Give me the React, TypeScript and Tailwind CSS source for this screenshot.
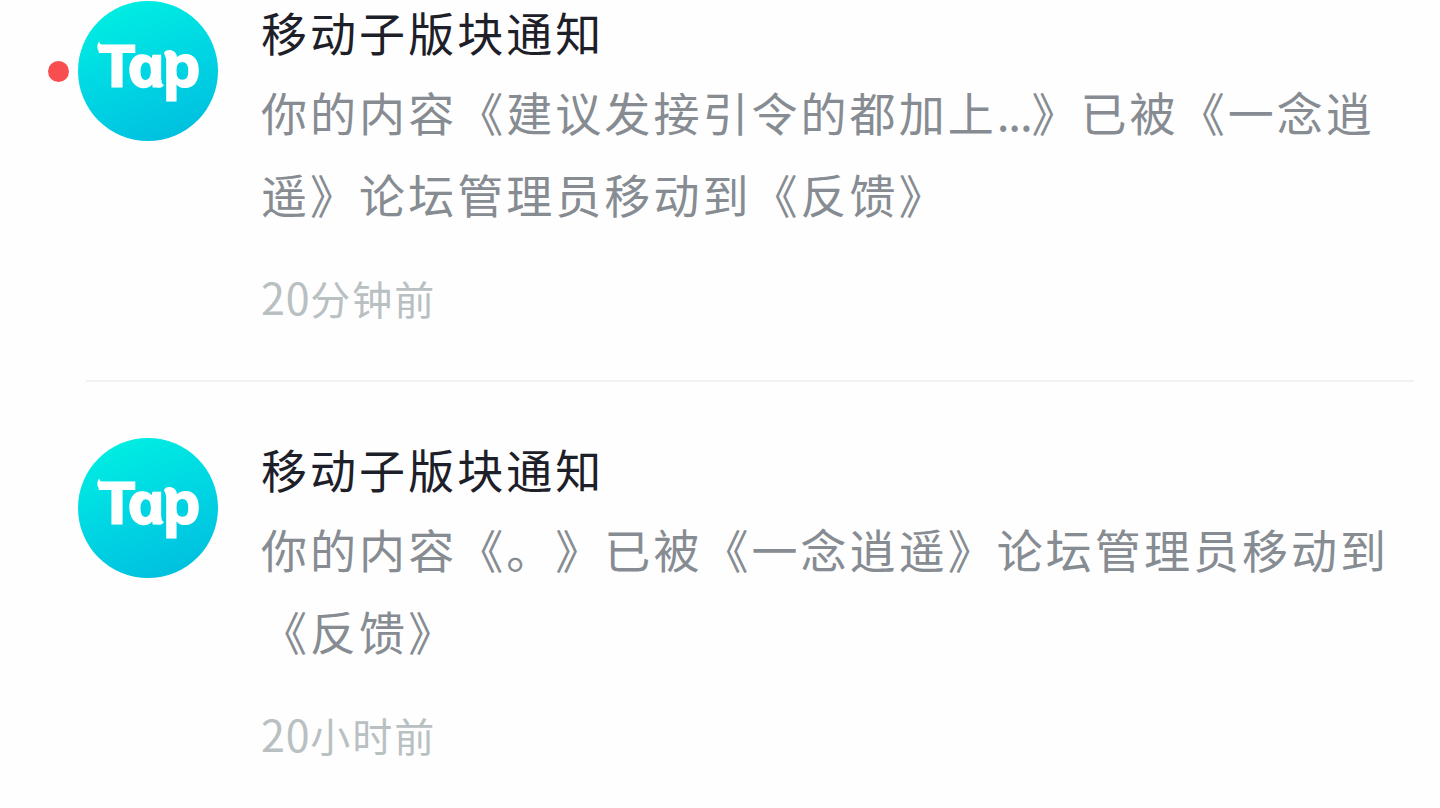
import React from 'react';

interface Notification {
  id: number;
  title: string;
  lines: string[];
  amount: string;
  unit: string;
  unread: boolean;
}

const notifications: Notification[] = [
  {
    id: 1,
    title: '移动子版块通知',
    lines: ['你的内容《建议发接引令的都加上...》已被《一念逍', '遥》论坛管理员移动到《反馈》'],
    amount: '20',
    unit: '分钟前',
    unread: true,
  },
  {
    id: 2,
    title: '移动子版块通知',
    lines: ['你的内容《。》已被《一念逍遥》论坛管理员移动到', '《反馈》'],
    amount: '20',
    unit: '小时前',
    unread: false,
  },
];

function TapAvatar() {
  return (
    <svg viewBox="0 0 140 140" className="block size-[140px]" role="img" aria-label="Tap">
      <defs>
        <linearGradient id="tap-bg" x1="0.3" y1="0" x2="0.7" y2="1">
          <stop offset="0" stopColor="#00eee2" />
          <stop offset="0.5" stopColor="#00d6e3" />
          <stop offset="1" stopColor="#00bfdf" />
        </linearGradient>
      </defs>
      <circle cx="70" cy="70" r="70" fill="url(#tap-bg)" />
      <g fill="#fff" stroke="#fff" className="font-['Open_Sans'] font-bold">
        <text x="20" y="85.5" fontSize="59" strokeWidth="1" textLength="38" lengthAdjust="spacingAndGlyphs">T</text>
        {/* Upright italic gives the single-storey "a" */}
        <text transform="translate(52.5 85.5) scale(1.12 1) skewX(12)" fontSize="58" strokeWidth="1.2" className="italic">a</text>
        <text x="84" y="85.5" fontSize="59" strokeWidth="1" textLength="39" lengthAdjust="spacingAndGlyphs">p</text>
        {/* Small flicks on the bar, the stem and the tail */}
        <g stroke="none">
          <path d="M21.5 40.5C18.5 43 18.5 49 22 51L28 51V44H24Q21.5 43.5 21.5 40.5Z" />
          <path d="M86 52C87 48.5 93 48 96 50.5Q99 52.5 99 57L89 60Z" />
          <path d="M79 78L83.5 79Q83 83 86 84Q84.5 87 80 86.5Q76 86 76 82Z" />
        </g>
      </g>
    </svg>
  );
}

// The dots of an ellipsis sit closer together than the characters around them
function BodyLine({ text }: { text: string }) {
  const [before, after] = text.split('...');
  return (
    <p>
      {before}
      {after !== undefined && (
        <>
          <span className="tracking-[-1.2px]">...</span>
          {after}
        </>
      )}
    </p>
  );
}

function NotificationItem({ item }: { item: Notification }) {
  return (
    <article className="flex h-[379px] pl-12">
      <div className="flex h-[140px] w-[30px] shrink-0 items-center">
        {item.unread && <span className="size-[21px] rounded-full bg-[#f94e50]" />}
      </div>
      <div className="shrink-0">
        <TapAvatar />
      </div>
      <div className="ml-[43px] whitespace-nowrap [text-spacing-trim:space-all]">
        <h2 className="h-[69px] text-[46px] leading-[61px] tracking-[3.05px] text-[#1d2028]">{item.title}</h2>
        <div className="text-[46px] leading-[82px] tracking-[3.05px] text-[#868c92]">
          {item.lines.map((line) => (
            <BodyLine key={line} text={line} />
          ))}
        </div>
        <p className="mt-[32px] text-[40px] leading-[60px] tracking-[2px] text-[#b9c0c2]">
          <span className="text-[43px] tracking-[0.8px]">{item.amount}</span>
          {item.unit}
        </p>
      </div>
    </article>
  );
}

export default function App() {
  return (
    <main
      lang="zh-CN"
      className="h-[808px] w-[1440px] overflow-hidden bg-[#fefefe] pt-px font-['Noto_Sans_CJK_SC',sans-serif]"
    >
      {notifications.map((item, index) => (
        <React.Fragment key={item.id}>
          {index > 0 && <div className="mr-[26px] mb-[55.5px] ml-[86px] h-0.5 bg-[#f1f1f1]" />}
          <NotificationItem item={item} />
        </React.Fragment>
      ))}
    </main>
  );
}
